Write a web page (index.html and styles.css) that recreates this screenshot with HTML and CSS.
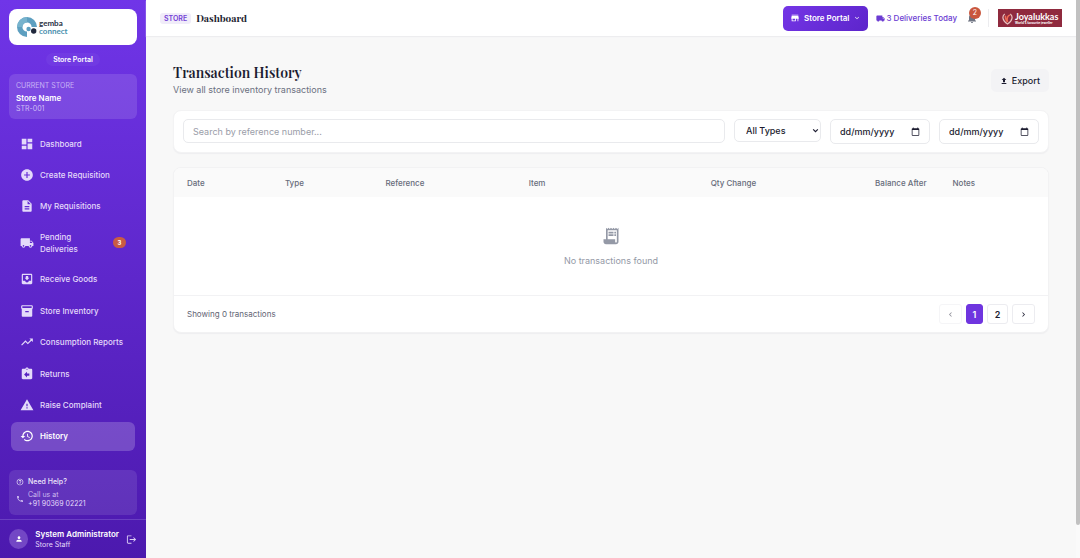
FILE: index.html
```
<!DOCTYPE html>
<html lang="en-GB">
<head>
<meta charset="utf-8">
<title>Transaction History</title>
<link rel="stylesheet" href="styles.css">
</head>
<body>
<div class="app">
  <aside class="sidebar">
    <div class="brand">
      <svg class="brand-mark" viewBox="0 0 20 20" aria-hidden="true">
        <path d="M10 0A10 10 0 0 0 10 20V14.6A4.6 4.6 0 1 1 14.6 10H20A10 10 0 0 0 10 0Z" fill="#5d9fc0"/>
        <path d="M10 0A10 10 0 0 0 0 10H5.4A4.6 4.6 0 0 1 10 5.4Z" fill="#77b3cd"/>
        <circle cx="11.6" cy="12" r="2.2" fill="#5d9fc0"/>
        <circle cx="16.7" cy="14" r="2.7" fill="#20283c"/>
      </svg>
      <span class="brand-name"><span>gemba</span><span class="brand-sub">connect</span></span>
    </div>
    <span class="portal-pill">Store Portal</span>
    <section class="store-card">
      <span class="store-label">CURRENT STORE</span>
      <strong class="store-name">Store Name</strong>
      <span class="store-code">STR-001</span>
    </section>
    <nav class="nav">
      <a class="nav-item" href="#"><svg class="icon" viewBox="0 0 24 24"><path d="M3 13h8V3H3v10zm0 8h8v-6H3v6zm10 0h8V11h-8v10zm0-18v6h8V3h-8z"/></svg><span class="nav-text">Dashboard</span></a>
      <a class="nav-item" href="#"><svg class="icon" viewBox="0 0 24 24"><path d="M12 2C6.48 2 2 6.48 2 12s4.48 10 10 10 10-4.480 10-10S17.520 2 12 2zm5 11h-4v4h-2v-4H7v-2h4V7h2v4h4v2z"/></svg><span class="nav-text">Create Requisition</span></a>
      <a class="nav-item" href="#"><svg class="icon" viewBox="0 0 24 24"><path d="M14 2H6c-1.100 0-2 .9-2 2v16c0 1.100.9 2 2 2h12c1.100 0 2-.9 2-2V8l-6-6zm2 16H8v-2h8v2zm0-4H8v-2h8v2zm-3-5V3.500L18.500 9H13z"/></svg><span class="nav-text">My Requisitions</span></a>
      <a class="nav-item nav-item-tall" href="#"><svg class="icon" viewBox="0 0 24 24"><path d="M20 8h-3V4H3c-1.100 0-2 .9-2 2v11h2c0 1.660 1.340 3 3 3s3-1.340 3-3h6c0 1.660 1.340 3 3 3s3-1.340 3-3h2v-5l-3-4zM6 18.500c-.83 0-1.500-.67-1.500-1.500s.67-1.500 1.500-1.500 1.500.67 1.500 1.500-.67 1.500-1.500 1.500zm13.500-9l1.960 2.500H17V9.500h2.500zm-1.500 9c-.83 0-1.500-.67-1.500-1.500s.67-1.500 1.500-1.500 1.500.67 1.500 1.500-.67 1.500-1.500 1.500z"/></svg><span class="nav-text">Pending Deliveries</span><span class="nav-badge">3</span></a>
      <a class="nav-item" href="#"><svg class="icon" viewBox="0 0 24 24"><path d="M19 3H5c-1.100 0-2 .9-2 2v14c0 1.100.9 2 2 2h14c1.100 0 2-.9 2-2V5c0-1.100-.9-2-2-2zm0 12h-4c0 1.660-1.350 3-3 3s-3-1.340-3-3H5V5h14v10zm-3-5h-2V7h-4v3H8l4 4 4-4z"/></svg><span class="nav-text">Receive Goods</span></a>
      <a class="nav-item" href="#"><svg class="icon" viewBox="0 0 24 24"><path d="M20 2H4c-1 0-2 .9-2 2v3c0 .7.430 1.340 1 1.700V20c0 1.100 1.100 2 2 2h14c.9 0 2-.9 2-2V8.700c.57-.36 1-1 1-1.700V4c0-1.100-1-2-2-2zm-5 12H9v-2h6v2zm5-7H4V4h16v3z"/></svg><span class="nav-text">Store Inventory</span></a>
      <a class="nav-item" href="#"><svg class="icon" viewBox="0 0 24 24"><path d="M16 6l2.290 2.290-4.880 4.880-4-4L2 16.590 3.410 18l6-6 4 4 6.300-6.290L22 12V6z"/></svg><span class="nav-text">Consumption Reports</span></a>
      <a class="nav-item" href="#"><svg class="icon" viewBox="0 0 24 24"><path d="M19 3h-4.180C14.400 1.840 13.300 1 12 1s-2.400.84-2.820 2H5c-1.100 0-2 .9-2 2v14c0 1.100.9 2 2 2h14c1.100 0 2-.9 2-2V5c0-1.100-.9-2-2-2zm-7 0c.55 0 1 .45 1 1s-.45 1-1 1-1-.45-1-1 .45-1 1-1zm4 12h-4v3l-5-5 5-5v3h4v4z"/></svg><span class="nav-text">Returns</span></a>
      <a class="nav-item" href="#"><svg class="icon" viewBox="0 0 24 24"><path d="M1 21h22L12 2 1 21zm12-3h-2v-2h2v2zm0-4h-2v-4h2v4z"/></svg><span class="nav-text">Raise Complaint</span></a>
      <a class="nav-item nav-item-active" href="#" aria-current="page"><svg class="icon" viewBox="0 0 24 24"><path d="M13 3c-4.970 0-9 4.030-9 9H1l3.890 3.890.07.14L9 12H6c0-3.870 3.130-7 7-7s7 3.130 7 7-3.130 7-7 7c-1.930 0-3.680-.79-4.940-2.060l-1.420 1.420C8.270 19.990 10.510 21 13 21c4.970 0 9-4.030 9-9s-4.030-9-9-9zm-1 5v5l4.280 2.540.72-1.210-3.500-2.080V8H12z"/></svg><span class="nav-text">History</span></a>
    </nav>
    <section class="help">
      <div class="help-row help-title"><svg class="icon-small" viewBox="0 0 24 24"><path d="M11 18h2v-2h-2v2zm1-16C6.480 2 2 6.480 2 12s4.480 10 10 10 10-4.480 10-10S17.520 2 12 2zm0 18c-4.410 0-8-3.590-8-8s3.590-8 8-8 8 3.590 8 8-3.590 8-8 8zm0-14c-2.210 0-4 1.790-4 4h2c0-1.100.9-2 2-2s2 .9 2 2c0 2-3 1.750-3 5h2c0-2.250 3-2.500 3-5 0-2.210-1.790-4-4-4z"/></svg><span>Need Help?</span></div>
      <div class="help-row"><svg class="icon-small" viewBox="0 0 24 24"><path d="M6.620 10.790c1.440 2.830 3.760 5.140 6.590 6.590l2.200-2.200c.27-.27.67-.36 1.020-.24 1.120.37 2.330.57 3.570.57.55 0 1 .45 1 1V20c0 .55-.45 1-1 1-9.390 0-17-7.610-17-17 0-.55.45-1 1-1h3.500c.55 0 1 .45 1 1 0 1.250.2 2.450.57 3.570.11.35.03.74-.25 1.020l-2.200 2.200z"/></svg><span>Call us at<br><span class="help-phone">+91 90369 02221</span></span></div>
    </section>
    <footer class="user">
      <span class="avatar"><svg viewBox="0 0 24 24"><path d="M12 12c2.210 0 4-1.790 4-4s-1.790-4-4-4-4 1.790-4 4 1.790 4 4 4zm0 2c-2.670 0-8 1.340-8 4v2h16v-2c0-2.660-5.330-4-8-4z"/></svg></span>
      <span class="user-info"><strong class="user-name">System Administrator</strong><span class="user-role">Store Staff</span></span>
      <button class="logout" aria-label="Log out"><svg viewBox="0 0 24 24"><path d="M17 7l-1.410 1.410L18.170 11H8v2h10.170l-2.580 2.580L17 17l5-5zM4 5h8V3H4c-1.100 0-2 .9-2 2v14c0 1.100.9 2 2 2h8v-2H4V5z"/></svg></button>
    </footer>
  </aside>

  <div class="main">
    <header class="topbar">
      <span class="tag">STORE</span>
      <h2 class="topbar-title">Dashboard</h2>
      <button class="portal-button"><svg class="portal-icon" viewBox="0 0 24 24"><path d="M20 4H4v2h16V4zm1 10v-2l-1-5H4l-1 5v2h1v6h10v-6h4v6h2v-6h1zm-9 4H6v-4h6v4z"/></svg><span>Store Portal</span><svg class="chevron" viewBox="0 0 24 24"><path d="M7.410 8.590L12 13.170l4.590-4.580L18 10l-6 6-6-6z"/></svg></button>
      <a class="deliveries" href="#"><svg class="deliveries-icon" viewBox="0 0 24 24"><path d="M20 8h-3V4H3c-1.100 0-2 .9-2 2v11h2c0 1.660 1.340 3 3 3s3-1.340 3-3h6c0 1.660 1.340 3 3 3s3-1.340 3-3h2v-5l-3-4zM18 9.500h1.500l1.960 2.500H18z"/></svg><span>3 Deliveries Today</span></a>
      <button class="bell" aria-label="Notifications"><svg viewBox="0 0 24 24"><path d="M12 22c1.100 0 2-.9 2-2h-4c0 1.100.89 2 2 2zm6-6v-5c0-3.070-1.640-5.640-4.500-6.320V4c0-.83-.67-1.500-1.500-1.500s-1.500.67-1.500 1.500v.68C7.630 5.360 6 7.920 6 11v5l-2 2v1h16v-1l-2-2z"/></svg><span class="bell-count">2</span></button>
      <div class="client">
        <svg class="client-mark" viewBox="0 0 12 14" aria-hidden="true"><path d="M3 2C0 4 0 9 6 13C12 9 12 4 9 2" fill="none" stroke="#e9c3c0" stroke-width="1.300"/><path d="M9 3C6 4 5 7 6 11M4 4C3 6 4 8 6 11" fill="none" stroke="#ee6b55" stroke-width="1.600"/></svg>
        <span class="client-text"><span class="client-name">Joyalukkas</span><span class="client-motto">World's favourite jeweller</span></span>
      </div>
    </header>

    <main class="content">
      <div class="page-head">
        <div>
          <h1 class="page-title">Transaction History</h1>
          <p class="page-sub">View all store inventory transactions</p>
        </div>
        <button class="export"><svg viewBox="0 0 24 24"><path d="M5 21h14v-3H5v3zM12 2L5 9h4v7h6V9h4L12 2z"/></svg><span>Export</span></button>
      </div>

      <form class="filters">
        <input class="field search" type="text" placeholder="Search by reference number..." aria-label="Search by reference number">
        <span class="types-wrap"><select class="field types" aria-label="Transaction type"><option>All Types</option></select><svg viewBox="0 0 12 12" aria-hidden="true"><path d="M2 4L6 8L10 4" fill="none" stroke="currentColor" stroke-width="2"/></svg></span>
        <label class="field date"><input type="text" placeholder="dd/mm/yyyy" aria-label="From date"><svg viewBox="0 0 24 24"><path d="M20 3h-1V1h-2v2H7V1H5v2H4c-1.100 0-2 .9-2 2v16c0 1.100.9 2 2 2h16c1.100 0 2-.9 2-2V5c0-1.100-.9-2-2-2zm0 18H4V8h16v13z"/></svg></label>
        <label class="field date"><input type="text" placeholder="dd/mm/yyyy" aria-label="To date"><svg viewBox="0 0 24 24"><path d="M20 3h-1V1h-2v2H7V1H5v2H4c-1.100 0-2 .9-2 2v16c0 1.100.9 2 2 2h16c1.100 0 2-.9 2-2V5c0-1.100-.9-2-2-2zm0 18H4V8h16v13z"/></svg></label>
      </form>

      <section class="panel">
        <table class="table">
          <colgroup><col class="c-date"><col class="c-type"><col class="c-ref"><col class="c-item"><col class="c-qty"><col class="c-balance"><col></colgroup>
          <thead><tr><th>Date</th><th>Type</th><th>Reference</th><th>Item</th><th class="num">Qty Change</th><th class="num">Balance After</th><th>Notes</th></tr></thead>
          <tbody><tr><td class="empty" colspan="7">
            <svg viewBox="0 0 24 24"><path d="M19.500 3.500L18 2l-1.500 1.500L15 2l-1.500 1.500L12 2l-1.500 1.500L9 2 7.500 3.500 6 2v14H3v3c0 1.660 1.340 3 3 3h12c1.660 0 3-1.340 3-3V2l-1.500 1.500zM19 19c0 .55-.45 1-1 1s-1-.45-1-1v-3H8V5h11v14z"/><path d="M9 7h6v2H9zM16 7h2v2h-2zM9 10h6v2H9zM16 10h2v2h-2z"/></svg>
            <p class="empty-text">No transactions found</p>
          </td></tr></tbody>
        </table>
        <div class="panel-foot">
          <span>Showing 0 transactions</span>
          <nav class="pages" aria-label="Pages">
            <button class="page page-arrow" disabled aria-label="Previous"><svg viewBox="0 0 24 24"><path d="M15.410 7.410L14 6l-6 6 6 6 1.410-1.410L10.830 12z"/></svg></button>
            <button class="page page-current">1</button>
            <button class="page">2</button>
            <button class="page page-arrow" aria-label="Next"><svg viewBox="0 0 24 24"><path d="M10 6L8.590 7.410 13.170 12l-4.580 4.590L10 18l6-6z"/></svg></button>
          </nav>
        </div>
      </section>
    </main>
  </div>
  <div class="scroll-track" aria-hidden="true"><div class="scroll-thumb"></div></div>
</div>
</body>
</html>
```
FILE: styles.css
```
* { box-sizing: border-box; }
body { margin: 0; font-family: Inter, "Liberation Sans", sans-serif; font-size: 9px; color: #1c1c30; background: #f8f8f8; }
button, input, select { font: inherit; color: inherit; }
button { cursor: pointer; border: 0; padding: 0; background: none; }
a { color: inherit; text-decoration: none; }
svg { fill: currentColor; display: block; flex: none; }
h1, h2, p { margin: 0; }

.app { display: flex; min-height: 100vh; }

/* Sidebar */
.sidebar { width: 146px; flex: none; display: flex; flex-direction: column; padding-top: 9px; color: #fff; background: linear-gradient(180deg, #7035e8 0%, #5e27cb 50%, #4c19ae 100%); }
.brand { margin: 0 9px; height: 36px; padding: 0 8px; border-radius: 8px; background: #fff; display: flex; align-items: center; gap: 2px; }
.brand-mark { width: 20px; height: 20px; }
.brand-name { display: flex; flex-direction: column; font-family: Lato, sans-serif; font-weight: 700; font-size: 8px; line-height: 8px; color: #29303f; }
.brand-sub { color: #4a8fae; }
.portal-pill { align-self: center; margin: 8px 0; padding: 0 7px; border-radius: 7px; font-size: 7px; line-height: 13px; font-weight: 600; background: rgba(255, 255, 255, 0.04); }
.store-card { margin: 0 9px; padding: 6px 7px; border-radius: 6px; background: rgba(255, 255, 255, 0.12); display: flex; flex-direction: column; }
.store-label { font-size: 7px; line-height: 11px; color: #c8b3f6; }
.store-name { font-size: 8px; line-height: 14px; font-weight: 600; }
.store-code { font-size: 7px; line-height: 8px; color: #cfbdf7; }

.nav { flex: 1; margin: 10px 11px 19px; display: flex; flex-direction: column; justify-content: space-between; }
.nav-item { height: 29px; padding: 0 9px; border-radius: 6px; display: flex; align-items: center; gap: 6px; font-size: 8px; line-height: 12px; font-weight: 500; color: #e4dafa; }
.nav-item-tall { height: 39px; }
.nav-item-active { background: rgba(255, 255, 255, 0.2); color: #fff; font-weight: 600; }
.nav-text { flex: 1; white-space: nowrap; }
.nav-item-tall .nav-text { white-space: normal; max-width: 50px; }
.nav-badge { margin-left: auto; width: 13px; height: 11px; border-radius: 6px; background: #c95c43; color: #fff; font-size: 6px; line-height: 11px; font-weight: 700; text-align: center; }
.icon { width: 14px; height: 14px; }

.help { margin: 0 9px 4px; padding: 7px; border-radius: 6px; background: rgba(255, 255, 255, 0.1); display: flex; flex-direction: column; gap: 3px; font-size: 7px; line-height: 9px; color: #cdbbef; }
.help-row { display: flex; align-items: center; gap: 4px; }
.help-title { color: #eee7fb; font-weight: 500; line-height: 10px; }
.help-phone { color: #e4dafa; }
.icon-small { width: 8px; height: 8px; }

.user { border-top: 1px solid #6a3fc2; height: 39px; padding: 0 9px; display: flex; align-items: center; gap: 7px; }
.avatar { width: 20px; height: 20px; border-radius: 50%; background: #7347c5; display: grid; place-items: center; }
.avatar svg { width: 8px; height: 8px; }
.user-info { flex: 1; white-space: nowrap; }
.user-name { display: block; font-size: 8px; line-height: 11px; font-weight: 600; }
.user-role { display: block; font-size: 7px; line-height: 9px; color: #e4dafa; }
.logout svg { width: 11px; height: 11px; color: #ddd0f5; }

/* Top bar */
.main { flex: 1; min-width: 0; }
.topbar { height: 36px; padding: 0 14px; display: flex; align-items: center; background: #fff; box-shadow: 0 1px 1px #ededef; }
.tag { padding: 0 4px; border-radius: 3px; background: #f0ecf9; color: #7340d6; font-size: 7px; line-height: 11px; font-weight: 600; }
.topbar-title { margin-left: 5px; font-family: "Playfair Display", "Liberation Serif", serif; font-size: 10px; line-height: 14px; font-weight: 700; }
.portal-button { margin-left: auto; height: 25px; padding: 0 7px; border-radius: 5px; display: flex; align-items: center; gap: 4px; color: #fff; font-size: 8px; font-weight: 600; background: linear-gradient(135deg, #7435e6, #5d25cb); }
.portal-icon { width: 10px; height: 10px; }
.chevron { width: 8px; height: 8px; }
.deliveries { margin-left: 8px; display: flex; align-items: center; gap: 1px; color: #6b3bd2; font-size: 8px; font-weight: 500; }
.deliveries-icon { width: 9px; height: 9px; }
.bell { position: relative; margin-left: 9px; width: 12px; height: 12px; }
.bell svg { width: 12px; height: 12px; color: #6f7482; }
.bell-count { position: absolute; left: 3px; top: -5px; width: 12px; height: 12px; border-radius: 50%; background: #c9573e; color: #fff; font-size: 7px; line-height: 12px; }
.client { margin-left: 20px; width: 64px; height: 18px; padding: 0 4px; background: #8f2a3e; color: #fff; display: flex; align-items: center; gap: 2px; position: relative; }
.client::before { content: ""; position: absolute; left: -10px; top: 0; width: 1px; height: 18px; background: #ececef; }
.client-mark { width: 11px; height: 13px; }
.client-text { white-space: nowrap; }
.client-name { display: block; font-family: Lato, sans-serif; font-size: 9px; line-height: 9px; font-weight: 700; }
.client-motto { display: block; font-size: 3px; line-height: 4px; font-weight: 700; }

/* Content */
.content { padding: 28px 27px; }
.page-head { display: flex; align-items: center; justify-content: space-between; }
.page-title { font-family: "Playfair Display", "Liberation Serif", serif; font-size: 14px; line-height: 18px; font-weight: 600; }
.page-sub { font-size: 9px; line-height: 15px; color: #6b7080; }
.export { height: 23px; padding: 0 9px; border-radius: 5px; background: #f3f3f5; display: flex; align-items: center; gap: 4px; font-weight: 500; }
.export svg { width: 8px; height: 8px; }

.filters { margin-top: 13px; padding: 8px 9px; border-radius: 8px; background: #fff; border: 1px solid #f3f3f4; box-shadow: 0 1px 1px #eeeef0; display: flex; align-items: flex-start; gap: 9px; }
.field { height: 24px; border: 1px solid #e9eaed; border-radius: 5px; background: #fff; padding: 0 9px; font-size: 9px; outline-color: #6b35dc; }
.search { flex: 1; min-width: 0; }
.search::placeholder { color: #9a9da8; opacity: 1; }
.types-wrap { position: relative; }
.types { display: block; width: 87px; height: 23px; padding: 0 0 0 11px; font-weight: 500; appearance: none; }
.types-wrap svg { position: absolute; right: 2px; top: 8px; width: 7px; height: 7px; pointer-events: none; }
.date { width: 100px; height: 25px; display: flex; align-items: center; justify-content: space-between; font-weight: 500; }
.date input { width: 64px; border: 0; padding: 0; outline: 0; background: none; }
.date input::placeholder { color: #1c1c30; opacity: 1; }
.date svg { width: 9px; height: 9px; }

.panel { margin-top: 14px; border: 1px solid #f2f2f3; border-radius: 8px; background: #fff; overflow: hidden; box-shadow: 0 1px 1px #eeeef0; }
.table { width: 100%; table-layout: fixed; border-collapse: collapse; }
.c-date { width: 11.2%; }
.c-type { width: 11.5%; }
.c-ref { width: 16.4%; }
.c-item { width: 20.8%; }
.c-qty { width: 8.2%; }
.c-balance { width: 19.5%; }
.table th { height: 29px; padding: 0 13px; text-align: left; white-space: nowrap; font-size: 8px; font-weight: 500; color: #676c7b; background: #fafafa; }
.table .num { text-align: right; direction: rtl; }
.empty { height: 98px; padding: 2px 0 0; text-align: center; color: #9499a6; }
.empty svg { width: 20px; height: 20px; margin: 0 auto 7px; }
.empty-text { line-height: 15px; }
.panel-foot { border-top: 1px solid #f2f2f4; height: 37px; padding: 0 13px; display: flex; align-items: center; justify-content: space-between; font-size: 8px; color: #5f6473; }
.pages { display: flex; gap: 4px; }
.page { height: 20px; min-width: 21px; border: 1px solid #ececf0; border-radius: 3px; background: #fff; color: #1c1c30; font-size: 9px; font-weight: 600; display: grid; place-items: center; }
.page-arrow { width: 23px; }
.page-arrow svg { width: 9px; height: 9px; }
.page:disabled { opacity: 0.5; }
.page-current { min-width: 17px; border-color: #6f35df; background: #6f35df; color: #fff; }

.scroll-track { width: 4px; flex: none; background: #fafafa; }
.scroll-thumb { position: sticky; top: 0; height: 94vh; border-radius: 0 0 2px 2px; background: #c1c1c1; }
```
